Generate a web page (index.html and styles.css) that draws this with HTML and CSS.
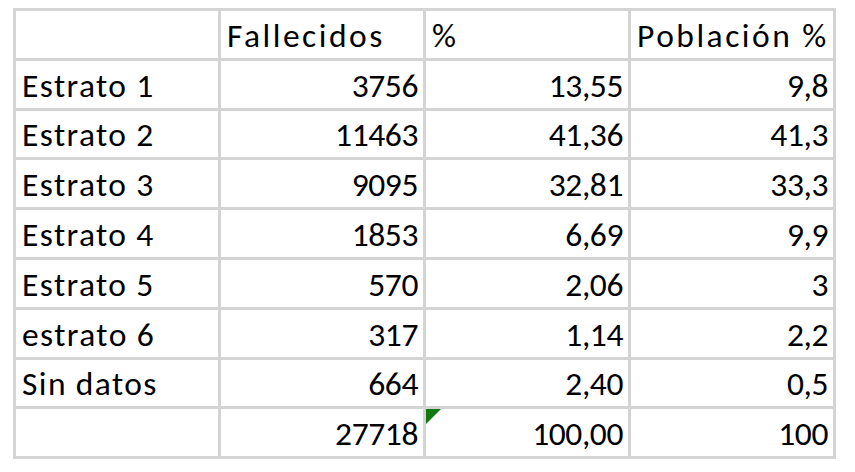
FILE: index.html
```html
<!DOCTYPE html>
<html lang="es">
<head>
<meta charset="utf-8">
<title>Fallecidos por estrato</title>
<link rel="stylesheet" href="styles.css">
</head>
<body>
<table class="sheet">
  <colgroup><col class="c"><col class="c"><col class="c"><col class="c"></colgroup>
  <tbody>
    <tr class="head"><td></td><td class="t">Fallecidos</td><td class="t">%</td><td class="t">Población %</td></tr>
    <tr><td class="t">Estrato 1</td><td class="n">3756</td><td class="n">13,55</td><td class="n">9,8</td></tr>
    <tr><td class="t">Estrato 2</td><td class="n">11463</td><td class="n">41,36</td><td class="n">41,3</td></tr>
    <tr><td class="t">Estrato 3</td><td class="n">9095</td><td class="n">32,81</td><td class="n">33,3</td></tr>
    <tr><td class="t">Estrato 4</td><td class="n">1853</td><td class="n">6,69</td><td class="n">9,9</td></tr>
    <tr><td class="t">Estrato 5</td><td class="n">570</td><td class="n">2,06</td><td class="n">3</td></tr>
    <tr><td class="t">estrato 6</td><td class="n">317</td><td class="n">1,14</td><td class="n">2,2</td></tr>
    <tr><td class="t">Sin datos</td><td class="n">664</td><td class="n">2,40</td><td class="n">0,5</td></tr>
    <tr><td></td><td class="n">27718</td><td class="n flag">100,00</td><td class="n">100</td></tr>
  </tbody>
</table>
</body>
</html>
```
FILE: styles.css
```css
html, body {
  margin: 0;
  background: #fff;
}
body {
  padding: 8px 0 0 13px;
  font-family: Carlito, Lato, "Open Sans", sans-serif;
  color: #000;
}
.sheet {
  border-collapse: separate;
  border-spacing: 0;
  table-layout: fixed;
  width: 823px;
  border-top: 3px solid #d4d4d4;
  border-left: 3px solid #d4d4d4;
}
.c { width: 205px; }
.sheet td {
  box-sizing: border-box;
  height: 49.8px;
  border-right: 3px solid #d4d4d4;
  border-bottom: 3px solid #d4d4d4;
  padding: 0 5px 5px 6px;
  vertical-align: bottom;
  font-size: 33.5px;
  line-height: 34px;
  white-space: nowrap;
  position: relative;
}
.t {
  text-align: left;
  letter-spacing: 1.4px;
}
.head .t {
  letter-spacing: 2.5px;
}
.n {
  text-align: right;
  letter-spacing: -0.4px;
}
.flag::before {
  content: "";
  position: absolute;
  left: 0;
  top: 0;
  width: 0;
  height: 0;
  border-top: 15px solid #0f7b0f;
  border-right: 15px solid transparent;
}
```
